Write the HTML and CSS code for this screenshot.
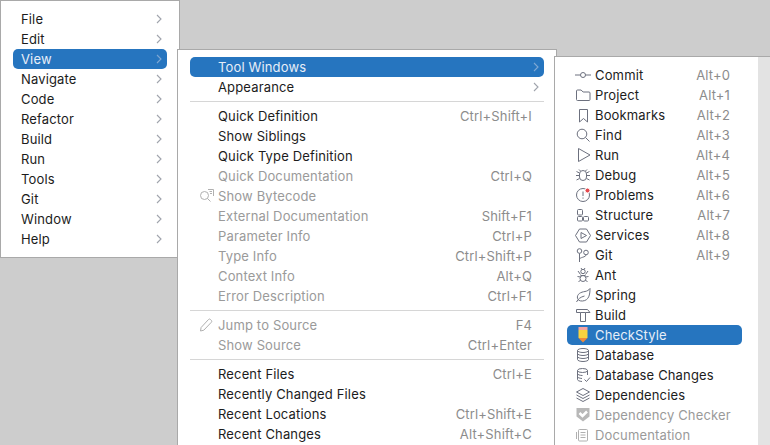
FILE: index.html
```html
<!DOCTYPE html>
<html>
<head>
  <title>View menu</title>
  <link rel="stylesheet" href="styles.css">
</head>
<body>
  <div class="menu menu-main">
    <div class="item"><span class="label">File</span><svg class="arrow" viewBox="0 0 8 10"><path d="M2 1l4 4-4 4"/></svg></div>
    <div class="item"><span class="label">Edit</span><svg class="arrow" viewBox="0 0 8 10"><path d="M2 1l4 4-4 4"/></svg></div>
    <div class="item selected"><span class="label">View</span><svg class="arrow" viewBox="0 0 8 10"><path d="M2 1l4 4-4 4"/></svg></div>
    <div class="item"><span class="label">Navigate</span><svg class="arrow" viewBox="0 0 8 10"><path d="M2 1l4 4-4 4"/></svg></div>
    <div class="item"><span class="label">Code</span><svg class="arrow" viewBox="0 0 8 10"><path d="M2 1l4 4-4 4"/></svg></div>
    <div class="item"><span class="label">Refactor</span><svg class="arrow" viewBox="0 0 8 10"><path d="M2 1l4 4-4 4"/></svg></div>
    <div class="item"><span class="label">Build</span><svg class="arrow" viewBox="0 0 8 10"><path d="M2 1l4 4-4 4"/></svg></div>
    <div class="item"><span class="label">Run</span><svg class="arrow" viewBox="0 0 8 10"><path d="M2 1l4 4-4 4"/></svg></div>
    <div class="item"><span class="label">Tools</span><svg class="arrow" viewBox="0 0 8 10"><path d="M2 1l4 4-4 4"/></svg></div>
    <div class="item"><span class="label">Git</span><svg class="arrow" viewBox="0 0 8 10"><path d="M2 1l4 4-4 4"/></svg></div>
    <div class="item"><span class="label">Window</span><svg class="arrow" viewBox="0 0 8 10"><path d="M2 1l4 4-4 4"/></svg></div>
    <div class="item"><span class="label">Help</span><svg class="arrow" viewBox="0 0 8 10"><path d="M2 1l4 4-4 4"/></svg></div>
  </div>

  <div class="menu menu-view">
    <div class="item selected"><span class="slot"></span><span class="label">Tool Windows</span><svg class="arrow" viewBox="0 0 8 10"><path d="M2 1l4 4-4 4"/></svg></div>
    <div class="item"><span class="slot"></span><span class="label">Appearance</span><svg class="arrow" viewBox="0 0 8 10"><path d="M2 1l4 4-4 4"/></svg></div>
    <div class="sep"></div>
    <div class="item"><span class="slot"></span><span class="label">Quick Definition</span><span class="keys">Ctrl+Shift+I</span></div>
    <div class="item"><span class="slot"></span><span class="label">Show Siblings</span></div>
    <div class="item"><span class="slot"></span><span class="label">Quick Type Definition</span></div>
    <div class="item off"><span class="slot"></span><span class="label">Quick Documentation</span><span class="keys">Ctrl+Q</span></div>
    <div class="item off">
      <svg class="slot" viewBox="0 0 16 16"><circle cx="6.500" cy="7.500" r="4"/><path d="M9.500 10.500l3 3M10 1.500h5.500v6.500M11.500 3.500h2.500M12 5.500h2"/></svg>
      <span class="label">Show Bytecode</span>
    </div>
    <div class="item off"><span class="slot"></span><span class="label">External Documentation</span><span class="keys">Shift+F1</span></div>
    <div class="item off"><span class="slot"></span><span class="label">Parameter Info</span><span class="keys">Ctrl+P</span></div>
    <div class="item off"><span class="slot"></span><span class="label">Type Info</span><span class="keys">Ctrl+Shift+P</span></div>
    <div class="item off"><span class="slot"></span><span class="label">Context Info</span><span class="keys">Alt+Q</span></div>
    <div class="item off"><span class="slot"></span><span class="label">Error Description</span><span class="keys">Ctrl+F1</span></div>
    <div class="sep"></div>
    <div class="item off">
      <svg class="slot" viewBox="0 0 16 16"><path d="M2.500 14l.6-3.500 7.400-8a1.400 1.400 0 0 1 2 0l.8.800a1.400 1.400 0 0 1 0 2L5.800 13.200z"/></svg>
      <span class="label">Jump to Source</span><span class="keys">F4</span>
    </div>
    <div class="item off"><span class="slot"></span><span class="label">Show Source</span><span class="keys">Ctrl+Enter</span></div>
    <div class="sep"></div>
    <div class="item"><span class="slot"></span><span class="label">Recent Files</span><span class="keys">Ctrl+E</span></div>
    <div class="item"><span class="slot"></span><span class="label">Recently Changed Files</span></div>
    <div class="item"><span class="slot"></span><span class="label">Recent Locations</span><span class="keys">Ctrl+Shift+E</span></div>
    <div class="item"><span class="slot"></span><span class="label">Recent Changes</span><span class="keys">Alt+Shift+C</span></div>
  </div>

  <div class="menu menu-tools">
    <div class="item">
      <svg class="slot" viewBox="0 0 16 16"><circle cx="8" cy="8" r="2.500"/><path d="M0 8h5.500M10.500 8H16"/></svg>
      <span class="label">Commit</span><span class="keys">Alt+0</span>
    </div>
    <div class="item">
      <svg class="slot" viewBox="0 0 16 16"><path d="M1.500 4a1 1 0 0 1 1-1h3.600l2 2h5.900a1 1 0 0 1 1 1v6.500a1 1 0 0 1-1 1h-11.500a1 1 0 0 1-1-1z"/></svg>
      <span class="label">Project</span><span class="keys">Alt+1</span>
    </div>
    <div class="item">
      <svg class="slot" viewBox="0 0 16 16"><path d="M4.500 2.500h8v12.500L8.500 11.500 4.500 15z"/></svg>
      <span class="label">Bookmarks</span><span class="keys">Alt+2</span>
    </div>
    <div class="item">
      <svg class="slot" viewBox="0 0 16 16"><circle cx="7" cy="7" r="4.800"/><path d="M10.500 10.500L14.500 14.500"/></svg>
      <span class="label">Find</span><span class="keys">Alt+3</span>
    </div>
    <div class="item">
      <svg class="slot" viewBox="0 0 16 16"><path d="M3.500 1.500L15 8 3.500 14.500z"/></svg>
      <span class="label">Run</span><span class="keys">Alt+4</span>
    </div>
    <div class="item">
      <svg class="slot" viewBox="0 0 16 16"><path d="M4.500 7a3.500 3.500 0 0 1 7 0v3a3.500 3.500 0 0 1-7 0zM5.500 4L4 2.500M10.500 4L12 2.500M1 8.500h3.500M11.500 8.500H15M1.500 13l3-1.500M14.500 13l-3-1.500M1.500 4.500l3 1.500M14.500 4.500l-3 1.500"/></svg>
      <span class="label">Debug</span><span class="keys">Alt+5</span>
    </div>
    <div class="item">
      <svg class="slot" viewBox="0 0 16 16"><circle cx="8" cy="8" r="6.500"/><path d="M8 4.500V9M8 10.500v1.200"/><circle class="dot" cx="12.500" cy="3.500" r="2.500"/></svg>
      <span class="label">Problems</span><span class="keys">Alt+6</span>
    </div>
    <div class="item">
      <svg class="slot" viewBox="0 0 16 16"><rect x="2.500" y="2.500" width="5" height="5.500" rx="1"/><rect x="2.500" y="9.500" width="5" height="4.500" rx="1"/><rect x="8.500" y="9.500" width="5" height="4.500" rx="1"/></svg>
      <span class="label">Structure</span><span class="keys">Alt+7</span>
    </div>
    <div class="item">
      <svg class="slot" viewBox="0 0 16 16"><path d="M4.500 2h7L15.500 8.500 11.500 15h-7L.5 8.500z"/><path d="M6 5.500L11.500 8.500 6 11.500z"/></svg>
      <span class="label">Services</span><span class="keys">Alt+8</span>
    </div>
    <div class="item">
      <svg class="slot" viewBox="0 0 16 16"><circle cx="4.500" cy="4" r="2.300"/><circle cx="11" cy="5.500" r="2.300"/><path d="M4.500 6.300V15M11 7.800c0 2.700-6.500 2.200-6.500 4.700"/></svg>
      <span class="label">Git</span><span class="keys">Alt+9</span>
    </div>
    <div class="item">
      <svg class="slot" viewBox="0 0 16 16"><circle cx="8" cy="4.500" r="2.200"/><ellipse cx="8" cy="11.500" rx="3" ry="3"/><path d="M5.500 8.500h5M6 1l1 1.500M10 1l-1 1.500M3 4l2.500 3.500M13 4l-2.500 3.500M2.500 9.500l3 .5M13.500 9.500l-3 .5M3.500 15l2-2M12.500 15l-2-2"/></svg>
      <span class="label">Ant</span>
    </div>
    <div class="item">
      <svg class="slot" viewBox="0 0 16 16"><path d="M15 1.500c0 6-1 12-7.500 12.500-3 .2-4.500-1-5-2.500C1.500 7 6 5 10 4.500c2-.3 4-1.500 5-3zM1.500 15c1.500-3 4-5 8-6"/></svg>
      <span class="label">Spring</span>
    </div>
    <div class="item">
      <svg class="slot" viewBox="0 0 16 16"><path d="M1.500 2.500h11l2.500 3H10.500M1.500 2.500v3h4M5.500 5.500h5v9h-5z"/></svg>
      <span class="label">Build</span>
    </div>
    <div class="item selected">
      <svg class="slot pencil" viewBox="0 0 16 16"><rect class="eraser" x="3.500" y="0" width="9" height="3"/><rect class="body" x="3.500" y="3" width="9" height="8"/><path class="tip" d="M3.500 11h9L8 15.500z"/></svg>
      <span class="label">CheckStyle</span>
    </div>
    <div class="item">
      <svg class="slot" viewBox="0 0 16 16"><ellipse cx="8" cy="3.500" rx="5.500" ry="2"/><path d="M2.500 3.500v9c0 1.100 2.500 2 5.500 2s5.500-.9 5.500-2v-9M2.500 6.500c0 1.100 2.500 2 5.500 2s5.500-.9 5.500-2M2.500 9.500c0 1.100 2.500 2 5.500 2s5.500-.9 5.500-2"/></svg>
      <span class="label">Database</span>
    </div>
    <div class="item">
      <svg class="slot" viewBox="0 0 16 16"><ellipse cx="7.500" cy="3.500" rx="5" ry="2"/><path d="M2.500 3.500v9c0 1 1.800 1.800 4.500 2M12.500 3.500V8M2.500 6.500c0 1.100 2.200 2 5 2M2.500 9.500c0 1 1.800 1.800 4.500 2M9.500 12.500l2 2 3.500-4"/></svg>
      <span class="label">Database Changes</span>
    </div>
    <div class="item">
      <svg class="slot" viewBox="0 0 16 16"><path d="M8 1.500l6.500 3.500L8 8.500 1.500 5zM1.500 8L8 11.500 14.500 8M1.500 11L8 14.500 14.500 11"/></svg>
      <span class="label">Dependencies</span>
    </div>
    <div class="item off">
      <svg class="slot" viewBox="0 0 16 16"><path class="shield" d="M1.500 1h13v8.500L8 14.500l-6.500-5z"/><path class="tick" d="M4.500 6l3 3L12 4.500"/></svg>
      <span class="label">Dependency Checker</span>
    </div>
    <div class="item off">
      <svg class="slot" viewBox="0 0 16 16"><rect x="3.500" y="2.500" width="9" height="11.500" rx="1"/><path d="M1.500 5v7M5.500 5.500h5M5.500 8h5M5.500 10.500h5"/></svg>
      <span class="label">Documentation</span>
    </div>
  </div>
  <div class="edge"></div>
</body>
</html>
```

FILE: styles.css
```css
html, body {
  height: 445px;
  margin: 0;
  overflow: hidden;
}
body {
  position: relative;
  background-color: #cdcdcd;
  font-family: Inter, sans-serif;
  font-size: 13px;
  letter-spacing: 0.15px;
  color: #1c1c1c;
}
.menu {
  position: absolute;
  box-sizing: border-box;
  background-color: #fff;
  border: 1px solid #a9a9a9;
  padding: 8px 12px;
}
.menu-main {
  left: 0;
  top: 0;
  width: 180px;
  height: 258px;
}
.menu-view {
  left: 177px;
  top: 49px;
  width: 380px;
  height: 420px;
  padding-top: 7px;
}
.menu-tools {
  left: 554px;
  top: 56px;
  width: 204px;
  height: 420px;
  border-right: none;
  padding-right: 16px;
}
.edge {
  position: absolute;
  left: 758px;
  top: 56px;
  width: 12px;
  height: 389px;
  background-color: #e3e3e3;
  border-top: 1px solid #a9a9a9;
}
.item {
  display: flex;
  align-items: center;
  gap: 4px;
  height: 20px;
  padding: 0 4px 0 8px;
  border-radius: 5px;
  white-space: nowrap;
}
.slot {
  flex: none;
  width: 16px;
  height: 16px;
  fill: none;
  stroke: #6c707e;
  stroke-width: 1;
}
.label {
  flex: 1;
}
.keys {
  margin-right: 8px;
  color: #8c8c8c;
}
.arrow {
  flex: none;
  width: 8px;
  height: 10px;
  fill: none;
  stroke: #a0a4ad;
  stroke-width: 1.1;
}
.menu-main .item {
  gap: 0;
}
.sep {
  height: 1px;
  margin: 4px 0;
  background-color: #d6d6d6;
}
.selected {
  background-color: #2675bf;
  color: #e6eef8;
}
.selected .arrow {
  stroke: #7fa8d4;
}
.off {
  color: #9a9a9a;
}
.off .slot {
  stroke: #b0b0b0;
}
.dot {
  fill: #e5484d;
  stroke: #fff;
}
.pencil {
  stroke: none;
}
.eraser {
  fill: #f2a3a3;
}
.body {
  fill: #f9d33f;
}
.tip {
  fill: #ef8a3c;
}
.off .shield {
  fill: #b8b8b8;
  stroke: none;
}
.off .tick {
  stroke: #fff;
  stroke-width: 2.5;
}
```
